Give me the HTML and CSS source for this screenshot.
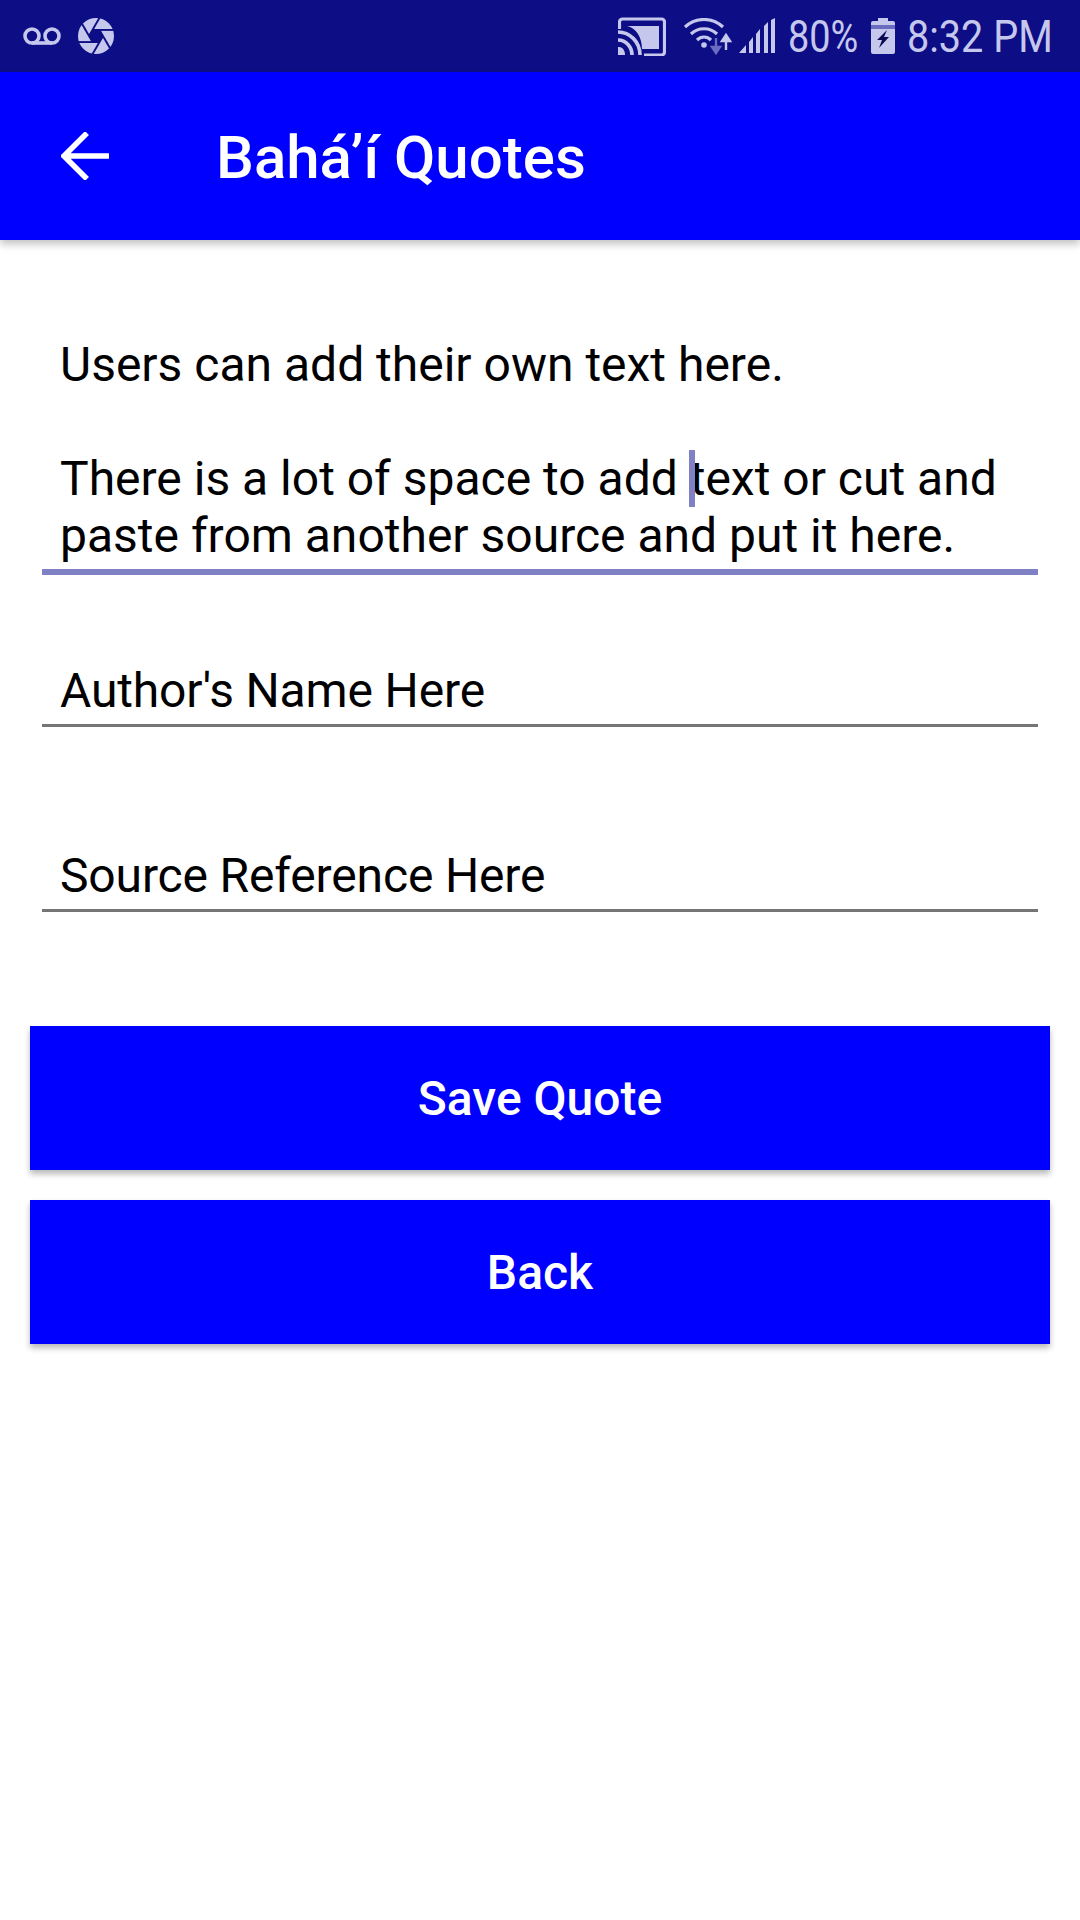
FILE: index.html
```html
<!DOCTYPE html>
<html lang="en">
<head>
    <meta charset="UTF-8">
    <meta name="viewport" content="width=device-width, initial-scale=1.0">
    <title>Bahá’í Quotes</title>
    <link rel="stylesheet" href="styles.css">
</head>
<body>
    <div class="status-bar">
        <div class="status-left">
            <svg class="icon-voicemail" width="38" height="20" viewBox="0 0 38 20">
                <circle cx="9" cy="10" r="7" fill="none" stroke="#c5c8ec" stroke-width="3.6"/>
                <circle cx="29" cy="10" r="7" fill="none" stroke="#c5c8ec" stroke-width="3.6"/>
                <path d="M9 17H29" stroke="#c5c8ec" stroke-width="3.6"/>
            </svg>
            <svg class="icon-shutter" width="36" height="36" viewBox="0 0 36 36">
                <circle cx="18" cy="18" r="18" fill="#c5c8ec"/>
                <path d="M25 18L21.5 24.06H14.5L11 18L14.5 11.94H21.5Z" fill="#0d0d85"/>
                <g stroke="#0d0d85" stroke-width="1.9">
                    <path d="M14.5 11.94H37"/>
                    <path d="M14.5 11.94H37" transform="rotate(60 18 18)"/>
                    <path d="M14.5 11.94H37" transform="rotate(120 18 18)"/>
                    <path d="M14.5 11.94H37" transform="rotate(180 18 18)"/>
                    <path d="M14.5 11.94H37" transform="rotate(240 18 18)"/>
                    <path d="M14.5 11.94H37" transform="rotate(300 18 18)"/>
                </g>
            </svg>
        </div>
        <div class="status-right">
            <svg class="icon-cast" width="48" height="39" viewBox="0 0 48 39">
                <path d="M1.5 12V5a3 3 0 0 1 3-3h39a3 3 0 0 1 3 3v30a3 3 0 0 1-3 3H26" fill="none" stroke="#c5c8ec" stroke-width="3.2"/>
                <path d="M9 9H41V32H24C24 20 18 11 9 9Z" fill="#c5c8ec"/>
                <path d="M0 15C12 15 22 25 22 38" fill="none" stroke="#c5c8ec" stroke-width="3.6"/>
                <path d="M0 23C8 23 14 30 14 38" fill="none" stroke="#c5c8ec" stroke-width="3.6"/>
                <path d="M0 30H1C5 30 7 34 7 38H0Z" fill="#c5c8ec"/>
            </svg>
            <svg class="icon-wifi" width="49" height="37" viewBox="0 0 49 37">
                <path d="M1 9C12 -1 28 -1 39 9" fill="none" stroke="#c5c8ec" stroke-width="3.2"/>
                <path d="M7 16C14 9 26 9 33 16" fill="none" stroke="#c5c8ec" stroke-width="3.2"/>
                <path d="M13 22C17 18 23 18 27 22" fill="none" stroke="#c5c8ec" stroke-width="3.2"/>
                <circle cx="20" cy="27" r="2.8" fill="#c5c8ec"/>
                <path d="M32 20V33M28 29L32 35L36 29Z" fill="#6a6cc0" stroke="#6a6cc0" stroke-width="2.4"/>
                <path d="M42 32V19M38 23L42 17L46 23Z" fill="#c5c8ec" stroke="#c5c8ec" stroke-width="2.4"/>
            </svg>
            <svg class="icon-signal" width="36" height="36" viewBox="0 0 36 36">
                <path d="M0 35L7 27V35Z" fill="#c5c8ec"/>
                <path d="M10 24L14 19V35H10Z" fill="#c5c8ec"/>
                <path d="M17 16L21 11V35H17Z" fill="#c5c8ec"/>
                <path d="M25 8L29 4V35H25Z" fill="#c5c8ec"/>
                <path d="M32 2L36 0V35H32Z" fill="#c5c8ec"/>
            </svg>
            <span class="status-text status-pct">80%</span>
            <svg class="icon-battery" width="24" height="36" viewBox="0 0 24 36">
                <path d="M7 0H17V3H22a2 2 0 0 1 2 2V34a2 2 0 0 1-2 2H2a2 2 0 0 1-2-2V5a2 2 0 0 1 2-2H7Z" fill="#c5c8ec"/>
                <path d="M0 7H24V11H0Z" fill="#6a6cc0"/>
                <path d="M16 12L6 22H11L8 30L18 19H13Z" fill="#0a0a50"/>
            </svg>
            <span class="status-text status-time">8:32 PM</span>
        </div>
    </div>

    <div class="toolbar">
        <svg class="back-arrow" width="48" height="48" viewBox="0 0 48 48">
            <path d="M48 24H5M26 1L3 24L26 47" fill="none" stroke="#fff" stroke-width="5.5"/>
        </svg>
        <div class="toolbar-title">Bahá’í Quotes</div>
    </div>

    <div class="content">
        <div class="field field-focused">
            <div class="field-text">Users can add their own text here.<br><br>There is a lot of space to add <span class="caret-spot"><span class="caret"></span></span>text or cut and paste from another source and put it here.</div>
        </div>
        <div class="field field-author">
            <div class="field-text field-single">Author's Name Here</div>
        </div>
        <div class="field field-source">
            <div class="field-text field-single">Source Reference Here</div>
        </div>

        <div class="buttons">
            <div class="btn">Save Quote</div>
            <div class="btn">Back</div>
        </div>
    </div>
</body>
</html>
```

FILE: styles.css
```css
* {
    box-sizing: border-box;
}
body {
    margin: 0;
    width: 1080px;
    height: 1920px;
    background-color: #fff;
    color: #000;
    font-family: 'Roboto', sans-serif;
    overflow: hidden;
}
.status-bar {
    height: 72px;
    background-color: #0d0d85;
    display: flex;
    justify-content: space-between;
    align-items: center;
    padding: 0 28px 0 23px;
}
.status-left {
    display: flex;
    align-items: center;
    gap: 17px;
}
.status-right {
    display: flex;
    align-items: center;
}
.status-text {
    display: block;
    padding-top: 2px;
    color: #c5c8ec;
    font-size: 44px;
    line-height: 50px;
    transform-origin: left center;
    white-space: nowrap;
}
.icon-cast {
    margin-right: 18px;
}
.icon-wifi {
    margin-right: 6px;
}
.icon-signal {
    margin-right: 13px;
}
.status-pct {
    width: 72px;
    transform: scaleX(0.86);
}
.icon-battery {
    margin-right: 12px;
    margin-left: 11px;
}
.status-time {
    width: 145px;
    transform: scaleX(0.9);
}
.toolbar {
    height: 168px;
    background-color: #0000ff;
    display: flex;
    align-items: center;
    padding-left: 60px;
    box-shadow: 0 4px 8px rgba(0, 0, 0, 0.25);
    position: relative;
}
.back-arrow {
    margin-left: 1px;
    margin-right: -1px;
}
.toolbar-title {
    margin-left: 108px;
    padding-top: 2px;
    color: #fff;
    font-size: 60px;
    font-weight: 500;
}
.content {
    padding: 96px 30px 0;
}
.field {
    margin: 0 12px;
    padding: 0 18px 5px;
    border-bottom: 3px solid #757575;
}
.field-focused {
    border-bottom: 6px solid #8080c4;
}
.field-author {
    margin-top: 87px;
}
.field-source {
    margin-top: 120px;
}
.field-text {
    font-size: 48px;
    line-height: 57px;
}
.field-single {
    letter-spacing: -0.15px;
}
.caret-spot {
    position: relative;
}
.caret {
    position: absolute;
    left: -1px;
    top: 0;
    width: 6px;
    height: 57px;
    background-color: #8080c4;
}
.buttons {
    margin-top: 114px;
    display: flex;
    flex-direction: column;
    gap: 30px;
}
.btn {
    height: 144px;
    padding-top: 1px;
    background-color: #0000ff;
    color: #fff;
    font-size: 48px;
    font-weight: 500;
    display: flex;
    align-items: center;
    justify-content: center;
    box-shadow: 0 4px 6px rgba(0, 0, 0, 0.28);
}
```
